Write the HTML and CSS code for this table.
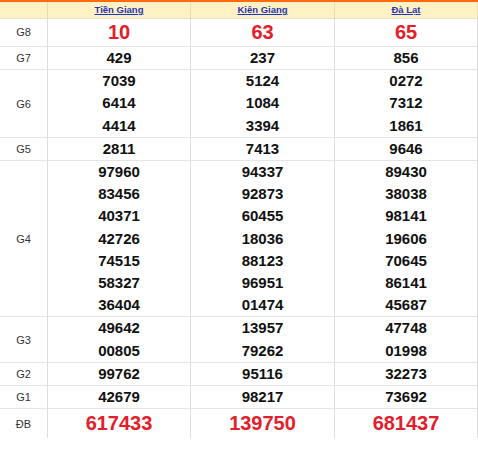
FILE: index.html
```html
<!DOCTYPE html>
<html lang="vi">
<head>
<meta charset="utf-8">
<title>Kết quả xổ số</title>
<link rel="stylesheet" href="styles.css">
</head>
<body>
<div class="kq">
  <div class="cell head"></div>
  <div class="cell head"><a href="#">Tiền Giang</a></div>
  <div class="cell head"><a href="#">Kiên Giang</a></div>
  <div class="cell head"><a href="#">Đà Lạt</a></div>

  <div class="cell label row-g8">G8</div>
  <div class="cell nums big row-g8"><div>10</div></div>
  <div class="cell nums big row-g8"><div>63</div></div>
  <div class="cell nums big row-g8"><div>65</div></div>

  <div class="cell label">G7</div>
  <div class="cell nums"><div>429</div></div>
  <div class="cell nums"><div>237</div></div>
  <div class="cell nums"><div>856</div></div>

  <div class="cell label">G6</div>
  <div class="cell nums"><div>7039</div><div>6414</div><div>4414</div></div>
  <div class="cell nums"><div>5124</div><div>1084</div><div>3394</div></div>
  <div class="cell nums"><div>0272</div><div>7312</div><div>1861</div></div>

  <div class="cell label">G5</div>
  <div class="cell nums"><div>2811</div></div>
  <div class="cell nums"><div>7413</div></div>
  <div class="cell nums"><div>9646</div></div>

  <div class="cell label">G4</div>
  <div class="cell nums"><div>97960</div><div>83456</div><div>40371</div><div>42726</div><div>74515</div><div>58327</div><div>36404</div></div>
  <div class="cell nums"><div>94337</div><div>92873</div><div>60455</div><div>18036</div><div>88123</div><div>96951</div><div>01474</div></div>
  <div class="cell nums"><div>89430</div><div>38038</div><div>98141</div><div>19606</div><div>70645</div><div>86141</div><div>45687</div></div>

  <div class="cell label">G3</div>
  <div class="cell nums"><div>49642</div><div>00805</div></div>
  <div class="cell nums"><div>13957</div><div>79262</div></div>
  <div class="cell nums"><div>47748</div><div>01998</div></div>

  <div class="cell label">G2</div>
  <div class="cell nums"><div>99762</div></div>
  <div class="cell nums"><div>95116</div></div>
  <div class="cell nums"><div>32273</div></div>

  <div class="cell label">G1</div>
  <div class="cell nums"><div>42679</div></div>
  <div class="cell nums"><div>98217</div></div>
  <div class="cell nums"><div>73692</div></div>

  <div class="cell label last">ĐB</div>
  <div class="cell nums big db last"><div>617433</div></div>
  <div class="cell nums big db last"><div>139750</div></div>
  <div class="cell nums big db last"><div>681437</div></div>
</div>
</body>
</html>
```

FILE: styles.css
```css
html, body {
  margin: 0;
  padding: 0;
  background: #ffffff;
}

body {
  font-family: "Liberation Sans", Arial, sans-serif;
}

.kq {
  width: 478px;
  display: grid;
  grid-template-columns: 48px 143px 144px 143px;
  border-top: 2px solid #fb6a0e;
}

.cell {
  box-sizing: border-box;
  border-right: 1px solid #dedede;
  border-bottom: 1px solid #e4e4e4;
  text-align: center;
}

.head {
  background: #fff1c4;
  border-right-color: #eadcb2;
  border-bottom-color: #e9e2cc;
  height: 17px;
  line-height: 16px;
  font-size: 9.5px;
  font-weight: bold;
}

.head a {
  color: #2535b0;
  text-decoration: underline;
}

.label {
  display: flex;
  align-items: center;
  justify-content: center;
  font-size: 11px;
  color: #333333;
}

.nums {
  font-size: 15px;
  font-weight: bold;
  color: #111111;
  line-height: 22.2px;
}

.row-g8 {
  line-height: 27px;
}

.big {
  font-size: 20px;
  color: #e3202a;
}

.db {
  line-height: 28px;
}

.last {
  border-bottom: none;
  height: 29px;
}
```
